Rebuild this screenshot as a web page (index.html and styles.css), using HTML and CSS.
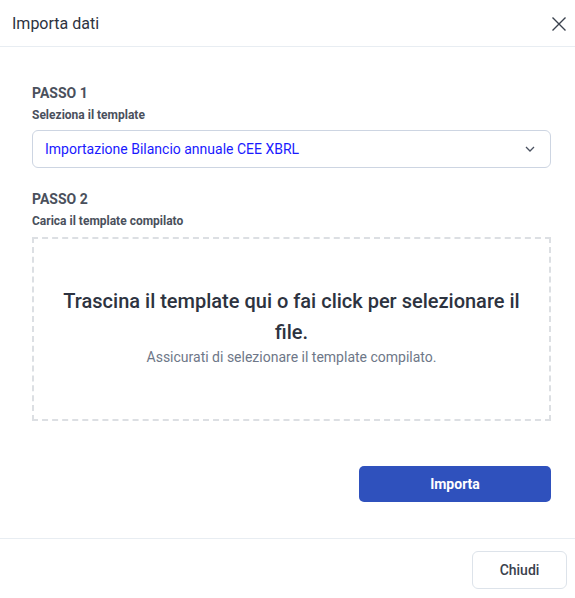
FILE: index.html
```html
<!DOCTYPE html>
<html lang="it">
<head>
  <meta charset="UTF-8" />
  <title>Importa dati</title>
  <link rel="stylesheet" href="styles.css">
</head>
<body>

<div class="modal">
  <div class="modal-header">
    <span class="modal-title">Importa dati</span>
    <button class="close-btn" aria-label="Chiudi">
      <svg width="16" height="16" viewBox="0 0 16 16"><path d="M1.5 1.5L14.5 14.5M14.5 1.5L1.5 14.5" stroke="#3a414d" stroke-width="1.4" fill="none"/></svg>
    </button>
  </div>

  <div class="modal-body">
    <div class="step">
      <div class="step-title">PASSO 1</div>
      <div class="step-label">Seleziona il template</div>
      <div class="select">
        <span>Importazione Bilancio annuale CEE XBRL</span>
        <svg width="10" height="6" viewBox="0 0 10 6"><path d="M1 1l4 4 4-4" stroke="#4a5160" stroke-width="1.3" fill="none"/></svg>
      </div>
    </div>

    <div class="step">
      <div class="step-title">PASSO 2</div>
      <div class="step-label">Carica il template compilato</div>
      <div class="dropzone">
        <div class="drop-title">Trascina il template qui o fai click per selezionare il file.</div>
        <div class="drop-hint">Assicurati di selezionare il template compilato.</div>
      </div>
    </div>

    <div class="actions">
      <button class="btn-primary">Importa</button>
    </div>
  </div>

  <div class="modal-footer">
    <button class="btn-secondary">Chiudi</button>
  </div>
</div>

</body>
</html>
```

FILE: styles.css
```css
body {
  margin: 0;
  background: #fff;
  font-family: Roboto, "Liberation Sans", Arial, sans-serif;
  color: #2d3340;
}

.modal {
  width: 575px;
  height: 598px;
  display: flex;
  flex-direction: column;
}

.modal-header {
  height: 47px;
  box-sizing: border-box;
  border-bottom: 1px solid #e8edf2;
  display: flex;
  align-items: center;
  justify-content: space-between;
  padding: 0 8px 0 12px;
}

.modal-title {
  font-size: 16px;
  color: #2d3340;
}

.close-btn {
  background: none;
  border: none;
  padding: 0;
  width: 16px;
  height: 16px;
  cursor: pointer;
  margin-top: 2px;
}

.modal-body {
  padding: 37px 24px 0 32px;
  flex: 1;
}

.step {
  margin-bottom: 22px;
}

.step-title {
  font-size: 14px;
  font-weight: 700;
  color: #4a505c;
  line-height: 18px;
}

.step-label {
  font-size: 12px;
  font-weight: 700;
  color: #4a505c;
  margin-top: 6px;
  line-height: 15px;
}

.select {
  margin-top: 7px;
  height: 38px;
  box-sizing: border-box;
  border: 1px solid #cdd5e2;
  border-radius: 6px;
  padding: 0 15px 0 12px;
  display: flex;
  align-items: center;
  justify-content: space-between;
  font-size: 14px;
  color: #1a1aff;
}

.dropzone {
  margin-top: 8px;
  height: 184px;
  box-sizing: border-box;
  border: 2px dashed #dcdfe3;
  display: flex;
  flex-direction: column;
  align-items: center;
  justify-content: center;
  text-align: center;
  padding: 0 24px 8px;
}

.drop-title {
  font-size: 20px;
  font-weight: 500;
  line-height: 31px;
  color: #2d3340;
}

.drop-hint {
  font-size: 14px;
  color: #6e7788;
  margin-top: 1px;
}

.actions {
  display: flex;
  justify-content: flex-end;
  margin-top: 45px;
}

.btn-primary {
  width: 192px;
  height: 36px;
  border: none;
  border-radius: 5px;
  background: #2f51bd;
  color: #fff;
  font-family: inherit;
  font-size: 14px;
  font-weight: 700;
  cursor: pointer;
}

.modal-footer {
  height: 60px;
  box-sizing: border-box;
  border-top: 1px solid #e8edf2;
  display: flex;
  justify-content: flex-end;
  align-items: center;
  padding: 0 8px;
}

.btn-secondary {
  width: 95px;
  height: 38px;
  background: #fff;
  border: 1px solid #dde3ea;
  border-radius: 6px;
  font-family: inherit;
  font-size: 14px;
  font-weight: 500;
  color: #3a414d;
  cursor: pointer;
  margin-top: 2px;
}
```
